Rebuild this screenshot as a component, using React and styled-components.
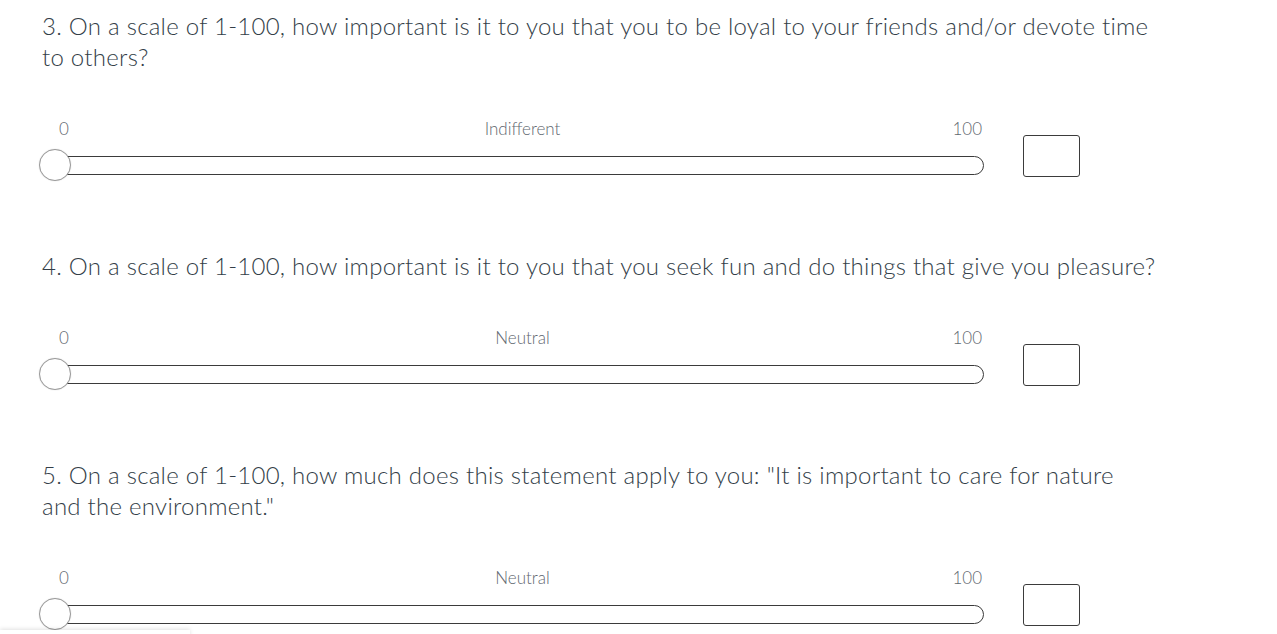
import React from "react";
import styled, { createGlobalStyle } from "styled-components";

const GlobalStyle = createGlobalStyle`
  html, body {
    margin: 0;
    padding: 0;
    background: #ffffff;
    overflow: hidden;
  }
  body {
    font-family: "Lato", "Liberation Sans", sans-serif;
  }
`;

const Page = styled.div`
  padding: 10px 0 0 42px;
  display: flex;
  flex-direction: column;
  gap: 69px;
`;

const Question = styled.section`
  display: flex;
  flex-direction: column;
  gap: 47px;
`;

const Title = styled.h2`
  margin: 0;
  width: 1115px;
  font-size: 24px;
  font-weight: 300;
  letter-spacing: 0.26px;
  line-height: 31px;
  color: #333e48;
`;

const Row = styled.div`
  display: flex;
  align-items: flex-start;
  margin-left: -4px;
  gap: 39px;
`;

const SliderCol = styled.div`
  width: 946px;
  display: flex;
  flex-direction: column;
  gap: 10px;
`;

const Labels = styled.div`
  display: grid;
  grid-template-columns: 1fr auto 1fr;
  padding: 0 2px 0 21px;
  font-size: 17px;
  font-weight: 300;
  line-height: 20px;
  color: #5f6870;
`;

const Label = styled.span`
  justify-self: ${(p) => p.$align};
  transform: translateX(${(p) => p.$shift || 0}px);
`;

const Slider = styled.div`
  position: relative;
  height: 32px;
  display: flex;
  align-items: center;
`;

const Track = styled.div`
  flex: 1;
  height: 17px;
  margin-left: 16px;
  border: 1px solid #3b3b3b;
  border-radius: 0 10px 10px 0;
  background: #fff;
`;

const Thumb = styled.div`
  position: absolute;
  left: 1px;
  top: 0;
  width: 30px;
  height: 30px;
  border-radius: 50%;
  background: #fff;
  border: 1.5px solid #9a9a9a;
  box-shadow: 0 0 1px rgba(0, 0, 0, 0.25);
`;

const ValueBox = styled.div`
  margin-top: 16px;
  width: 55px;
  height: 40px;
  border: 1px solid #3b3b3b;
  border-radius: 3px;
  background: #fff;
`;

const BottomEdge = styled.div`
  position: fixed;
  left: 0;
  bottom: -6px;
  width: 190px;
  height: 10px;
  background: #fff;
  box-shadow: 0 -1px 4px rgba(0, 0, 0, 0.12);
`;

const questions = [
  {
    text: "3. On a scale of 1-100, how important is it to you that you to be loyal to your friends and/or devote time to others?",
    middle: "Indifferent",
  },
  {
    text: "4. On a scale of 1-100, how important is it to you that you seek fun and do things that give you pleasure?",
    middle: "Neutral",
  },
  {
    text: '5. On a scale of 1-100, how much does this statement apply to you: "It is important to care for nature and the environment."',
    middle: "Neutral",
  },
];

export default function App() {
  return (
    <>
      <GlobalStyle />
      <Page>
        {questions.map((q) => (
          <Question key={q.text}>
            <Title>{q.text}</Title>
            <Row>
              <SliderCol>
                <Labels>
                  <Label $align="start">0</Label>
                  <Label $align="center" $shift={2}>
                    {q.middle}
                  </Label>
                  <Label $align="end">100</Label>
                </Labels>
                <Slider>
                  <Track />
                  <Thumb />
                </Slider>
              </SliderCol>
              <ValueBox />
            </Row>
          </Question>
        ))}
      </Page>
      <BottomEdge />
    </>
  );
}
